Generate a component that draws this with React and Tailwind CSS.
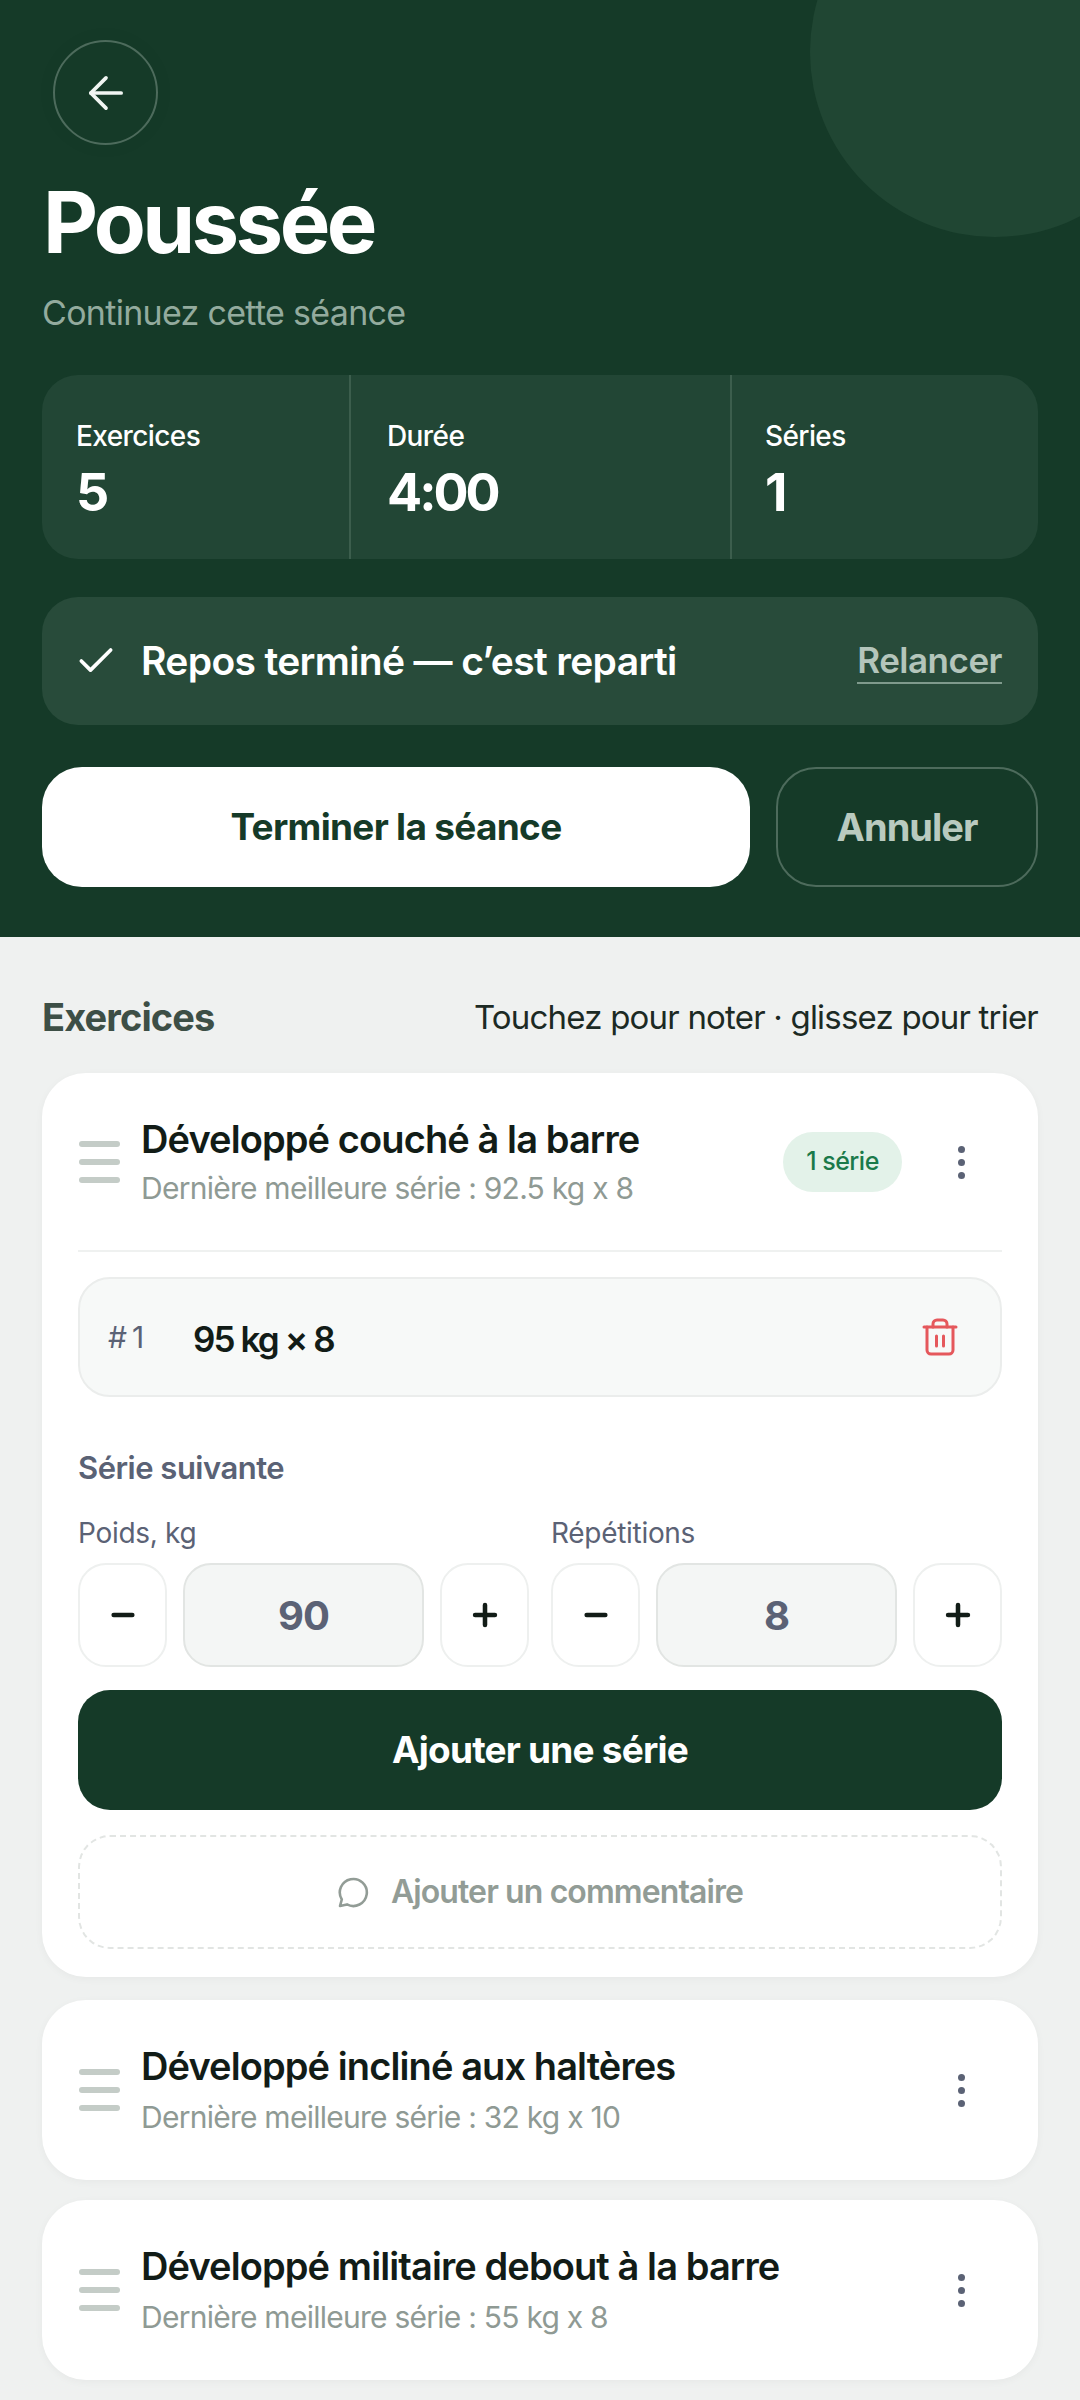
import React from "react";
import { ArrowLeft, Check, Plus, Minus } from "lucide-react";

const DragHandle = () => (
  <div className="ml-[1px] flex w-[41px] shrink-0 flex-col gap-[12px]">
    <span className="h-[6px] rounded-full bg-[#c4ccc7]" />
    <span className="h-[6px] rounded-full bg-[#c4ccc7]" />
    <span className="h-[6px] rounded-full bg-[#c4ccc7]" />
  </div>
);

const Kebab = () => (
  <div className="flex w-[8px] flex-col gap-[6px]">
    <span className="h-[7px] w-[7px] rounded-full bg-[#5b6275]" />
    <span className="h-[7px] w-[7px] rounded-full bg-[#5b6275]" />
    <span className="h-[7px] w-[7px] rounded-full bg-[#5b6275]" />
  </div>
);

const Stat = ({ label, value, className }) => (
  <div className={`flex flex-col pt-[44px] ${className}`}>
    <span className="text-[28px] leading-[34px] font-medium tracking-[-0.6px] text-white">{label}</span>
    <span className="mt-[9px] text-[52px] leading-[62px] font-bold tracking-[-3px] text-white">{value}</span>
  </div>
);

const Stepper = ({ label, value }) => (
  <div className="flex w-[451px] flex-col">
    <span className="text-[28px] leading-[34px] tracking-[-0.3px] text-[#5b6275]">{label}</span>
    <div className="mt-[13px] flex h-[104px] gap-[16px]">
      <button className="flex w-[89px] items-center justify-center rounded-[28px] border-2 border-[#eef0ef] bg-white text-[#121c17]">
        <Minus size={32} strokeWidth={3.4} />
      </button>
      <div className="flex flex-1 items-center justify-center rounded-[28px] border-2 border-[#e2e5e3] bg-[#f4f6f5] pt-[2px] text-[40px] font-bold tracking-[-1px] text-[#5b6275]">
        {value}
      </div>
      <button className="flex w-[89px] items-center justify-center rounded-[28px] border-2 border-[#eef0ef] bg-white text-[#121c17]">
        <Plus size={34} strokeWidth={3.2} />
      </button>
    </div>
  </div>
);

const ExerciseRow = ({ title, sub, badge }) => (
  <div className="flex items-center">
    <DragHandle />
    <div className="ml-[21px] flex-1">
      <div className="text-[38px] leading-[44px] font-semibold tracking-[-0.9px] text-[#121c17]">{title}</div>
      <div className={`${badge ? "mt-[8px]" : "mt-[10px]"} text-[30px] leading-[38px] tracking-[-0.75px] text-[#8f9a94]`}>{sub}</div>
    </div>
    {badge && (
      <span className="mr-[56px] flex h-[60px] w-[119px] items-center justify-center rounded-full bg-[#e3f2e9] text-[25px] font-medium tracking-[-0.5px] text-[#1a7a4a]">
        {badge}
      </span>
    )}
    <div className="mr-[36px]">
      <Kebab />
    </div>
  </div>
);

const App = () => {
  return (
    <div className="h-[2400px] w-[1080px] overflow-hidden bg-[#eff1f0] font-['Inter',sans-serif]">
      {/* Header */}
      <header className="relative h-[937px] overflow-hidden bg-[#153a28] px-[42px] pt-[40px]">
        <div className="absolute right-[-100px] top-[-133px] h-[370px] w-[370px] rounded-full bg-[#204633]" />
        <button className="relative ml-[11px] flex h-[105px] w-[105px] items-center justify-center rounded-full border-2 border-[#4d6b5c] text-[#f0f5f2] shadow-[0_0_0_12px_rgba(0,0,0,0.015)]">
          <ArrowLeft size={52} strokeWidth={1.7} />
        </button>
        <h1 className="relative mt-[28px] ml-[1px] text-[85px] leading-[100px] font-bold tracking-[-3.6px] text-white">Poussée</h1>
        <p className="relative mt-[19px] text-[34px] leading-[42px] tracking-[-0.7px] text-[#93ab9e]">Continuez cette séance</p>

        <div className="relative mt-[41px] flex h-[184px] rounded-[36px] bg-[#224635]">
          <Stat label="Exercices" value="5" className="w-[309px] border-r-2 border-[#3c5e4d] pl-[34px]" />
          <Stat label="Durée" value="4:00" className="w-[381px] border-r-2 border-[#3c5e4d] pl-[36px]" />
          <Stat label="Séries" value="1" className="flex-1 pl-[33px]" />
        </div>

        <div className="relative mt-[38px] flex h-[128px] items-center rounded-[36px] bg-[#284b3a] pl-[32px] pr-[36px]">
          <Check size={44} strokeWidth={2} className="text-white" />
          <span className="ml-[23px] flex-1 text-[39px] font-semibold tracking-[-0.65px] text-white">Repos terminé — c’est reparti</span>
          <span className="mt-[2px] border-b-2 border-[#7f9a8c] pb-[2px] text-[35px] leading-[40px] font-semibold tracking-[-0.5px] text-[#b4c5bb]">Relancer</span>
        </div>

        <div className="relative mt-[42px] flex h-[120px] gap-[26px]">
          <button className="w-[708px] rounded-[40px] bg-white text-[37px] font-bold tracking-[-0.7px] text-[#153a28]">Terminer la séance</button>
          <button className="flex-1 rounded-[40px] border-2 border-[#4d6b5c] text-[38px] font-bold tracking-[-1px] text-[#b9cabf]">Annuler</button>
        </div>
      </header>

      {/* Exercices */}
      <section className="px-[42px]">
        <div className="flex h-[136px] items-center justify-between pt-[24px]">
          <h2 className="text-[38px] font-bold tracking-[-0.9px] text-[#3d4f46]">Exercices</h2>
          <span className="mt-[2px] text-[33px] tracking-[-0.8px] text-[#1c2a24]">Touchez pour noter · glissez pour trier</span>
        </div>

        <div className="h-[904px] rounded-[44px] bg-white px-[36px] pt-[44px] shadow-[0_2px_8px_rgba(0,0,0,0.04)]">
          <ExerciseRow title="Développé couché à la barre" sub="Dernière meilleure série : 92.5 kg x 8" badge="1 série" />
          <div className="mt-[43px] h-[2px] bg-[#eff1f0]" />

          <div className="mt-[25px] flex h-[120px] items-center rounded-[32px] border-2 border-[#ebedec] bg-[#f7f9f8] pl-[28px] pr-[42px]">
            <span className="w-[85px] text-[30px] tracking-[5px] text-[#5b6275]">#1</span>
            <span className="flex-1 pt-[4px] text-[35px] font-semibold tracking-[-1.9px] text-[#121c17]">95 kg × 8</span>
            <svg width="36" height="38" viewBox="0 0 36 38" fill="none" stroke="#e5585c" strokeWidth="3" strokeLinecap="round" strokeLinejoin="round">
              <path d="M2 9h32" />
              <path d="M11 9V6a4 4 0 0 1 4-4h6a4 4 0 0 1 4 4v3" />
              <path d="M5 9v23a4 4 0 0 0 4 4h18a4 4 0 0 0 4-4V9" />
              <path d="M14.500 18v10" />
              <path d="M21.500 18v10" />
            </svg>
          </div>

          <div className="mt-[53px] text-[31px] leading-[36px] font-semibold tracking-[-0.5px] text-[#5a6275]">Série suivante</div>
          <div className="mt-[30px] flex justify-between">
            <Stepper label="Poids, kg" value="90" />
            <Stepper label="Répétitions" value="8" />
          </div>

          <button className="mt-[23px] h-[120px] w-full rounded-[32px] bg-[#153a28] text-[37px] font-bold tracking-[-0.8px] text-white">Ajouter une série</button>

          <button className="mt-[25px] flex h-[114px] w-full items-center justify-center gap-[22px] rounded-[32px] border-2 border-dashed border-[#e2e5e3] text-[32px] font-semibold tracking-[-0.9px] text-[#929c96]">
            <svg width="32" height="32" viewBox="0 0 32 32" fill="none" stroke="#929c96" strokeWidth="2.600" strokeLinejoin="round" strokeLinecap="round">
              <path d="M3 30l1.800-6.500A13.500 13.500 0 1 1 10 28.400z" />
            </svg>
            Ajouter un commentaire
          </button>
        </div>

        <div className="mt-[23px] flex flex-col gap-[20px]">
          <div className="flex h-[180px] flex-col justify-center rounded-[44px] bg-white px-[36px] shadow-[0_2px_8px_rgba(0,0,0,0.04)]">
            <ExerciseRow title="Développé incliné aux haltères" sub="Dernière meilleure série : 32 kg x 10" />
          </div>
          <div className="flex h-[180px] flex-col justify-center rounded-[44px] bg-white px-[36px] shadow-[0_2px_8px_rgba(0,0,0,0.04)]">
            <ExerciseRow title="Développé militaire debout à la barre" sub="Dernière meilleure série : 55 kg x 8" />
          </div>
        </div>
      </section>
    </div>
  );
};

export default App;
